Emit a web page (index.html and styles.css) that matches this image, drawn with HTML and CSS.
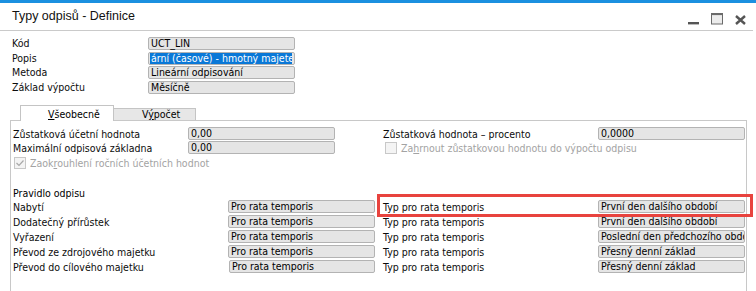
FILE: index.html
```html
<!DOCTYPE html>
<html lang="cs">
<head>
<meta charset="utf-8">
<title>Typy odpisů - Definice</title>
<link rel="stylesheet" href="styles.css">
</head>
<body>
<div class="window">
  <div class="topbar"></div>
  <div class="titlebar">
    <span class="title">Typy odpisů - Definice</span>
    <div class="winbtns">
      <svg class="btn-min" width="12" height="12" viewBox="0 0 12 12"><rect x="0" y="8" width="11" height="2.4" fill="#555"/></svg>
      <svg class="btn-max" width="13" height="12" viewBox="0 0 13 12"><rect x="0.5" y="0.5" width="11" height="10.5" fill="#ececec" stroke="#6a6a6a"/><rect x="0.5" y="0.5" width="11" height="1.6" fill="#6a6a6a"/></svg>
      <svg class="btn-close" width="11" height="10" viewBox="0 0 11 10"><path d="M1 1 L10 9 M10 1 L1 9" stroke="#555" stroke-width="2.4"/></svg>
    </div>
  </div>

  <div class="header-form">
    <span class="lbl">Kód</span><div class="field">UCT_LIN</div>
    <span class="lbl">Popis</span><div class="field sel"><span class="selected">ární (časové) - hmotný majetek</span></div>
    <span class="lbl">Metoda</span><div class="field">Lineární odpisování</div>
    <span class="lbl">Základ výpočtu</span><div class="field">Měsíčně</div>
  </div>

  <div class="content">
    <div class="tabs">
      <div class="tab active"><u>V</u>šeobecně</div>
      <div class="tab">V<u>ý</u>počet</div>
    </div>
    <div class="panel">
      <div class="grid-top">
        <span class="lbl">Zůstatková účetní hodnota</span>
        <div class="field">0,00</div>
        <span class="spacer"></span>
        <span class="lbl">Zůstatková hodnota – procento</span>
        <div class="field">0,0000</div>

        <span class="lbl">Maximální odpisová základna</span>
        <div class="field">0,00</div>
        <span class="spacer"></span>
        <div class="check check-right"><span class="box"></span><span class="ctext">Za<u>h</u>rnout zůstatkovou hodnotu do výpočtu odpisu</span></div>

        <div class="check check-left"><span class="box checked"><svg width="10" height="10" viewBox="0 0 10 10"><path d="M1.5 5 L4 7.5 L8.5 2.5" fill="none" stroke="#a8a8a8" stroke-width="1.2"/></svg></span><span class="ctext">Zaok<u>r</u>ouhlení ročních účetních hodnot</span></div>
      </div>

      <div class="rule-title">Pravidlo odpisu</div>

      <div class="grid-rules">
        <span class="lbl">Nabytí</span><div class="field">Pro rata temporis</div><span class="spacer"></span>
        <span class="lbl">Typ pro rata temporis</span><div class="field">První den dalšího období</div>

        <span class="lbl">Dodatečný přírůstek</span><div class="field">Pro rata temporis</div><span class="spacer"></span>
        <span class="lbl">Typ pro rata temporis</span><div class="field">První den dalšího období</div>

        <span class="lbl">Vyřazení</span><div class="field">Pro rata temporis</div><span class="spacer"></span>
        <span class="lbl">Typ pro rata temporis</span><div class="field">Poslední den předchozího období</div>

        <span class="lbl">Převod ze zdrojového majetku</span><div class="field">Pro rata temporis</div><span class="spacer"></span>
        <span class="lbl">Typ pro rata temporis</span><div class="field">Přesný denní základ</div>

        <span class="lbl">Převod do cílového majetku</span><div class="field shift">Pro rata temporis</div><span class="spacer"></span>
        <span class="lbl">Typ pro rata temporis</span><div class="field">Přesný denní základ</div>
      </div>

      <div class="highlight"></div>
    </div>
  </div>
</div>
</body>
</html>
```

FILE: styles.css
```css
* { box-sizing: border-box; }
html, body {
  margin: 0;
  padding: 0;
  background: #ffffff;
}
body {
  width: 756px;
  height: 291px;
  overflow: hidden;
  font-family: "DejaVu Sans Condensed", "DejaVu Sans", "Liberation Sans", sans-serif;
  font-size: 10.5px;
  color: #000;
}
.window {
  width: 756px;
  height: 291px;
  overflow: hidden;
  background: #fff;
}
.topbar {
  height: 3px;
  background: #1b90e0;
}
.titlebar {
  height: 28px;
  margin-right: 3px;
  border-bottom: 1px solid #cacaca;
  display: flex;
  align-items: center;
  justify-content: space-between;
  padding-left: 12px;
}
.title {
  font-family: "Liberation Sans", Arial, sans-serif;
  font-size: 12.5px;
  color: #111;
  margin-top: -1px;
}
.winbtns {
  display: flex;
  align-items: flex-start;
  height: 27px;
  padding-top: 9px;
}
.btn-min { margin-top: 2px; margin-right: 11px; }
.btn-max { margin-top: 1px; margin-right: 11px; }
.btn-close { margin-top: 3px; margin-right: 7px; }

.header-form {
  display: grid;
  grid-template-columns: 136px 147px;
  grid-auto-rows: 13px;
  row-gap: 1.67px;
  padding: 6px 0 0 12px;
}
.lbl {
  line-height: 14px;
  white-space: nowrap;
  color: #0c0c0c;
}
.header-form .lbl { line-height: 13px; }
.field {
  height: 13px;
  border: 1px solid #b3b3b3;
  border-radius: 2px;
  background: #e5e5e5;
  line-height: 11px;
  padding-left: 2px;
  white-space: nowrap;
  overflow-x: clip;
  overflow-y: visible;
  color: #000;
}
.field.sel { padding-left: 1px; }
.selected {
  background: #0a78d7;
  color: #fff;
  display: inline-block;
  width: 142px;
  overflow: hidden;
  padding-left: 1px;
}

.content {
  margin: 11px 0 0 10px;
  width: 737px;
}
.tabs {
  display: flex;
  align-items: flex-end;
  height: 15px;
  padding-left: 10px;
}
.tab {
  border: 1px solid #c4c4c4;
  border-bottom: none;
  padding-left: 27px;
  line-height: 11px;
  white-space: nowrap;
}
.tab.active {
  width: 94px;
  height: 16px;
  margin-bottom: -1px;
  background: #fff;
  position: relative;
  z-index: 1;
  padding-top: 3px;
}
.tab:not(.active) {
  width: 83px;
  height: 12px;
  margin-left: -1px;
  background: #e7e7e7;
  padding-top: 0px;
  padding-left: 28px;
}
.panel {
  position: relative;
  border: 1px solid #c8c8c8;
  height: 200px;
  padding: 6px 0 0 2px;
}
.grid-top {
  display: grid;
  grid-template-columns: 175px 147px 48px 215px 147px;
  grid-template-rows: 14px 14px 15px;
}
.check {
  display: flex;
  align-items: center;
  color: #a3a3a3;
  white-space: nowrap;
}
.check-right {
  grid-column: 4 / 6;
  padding-left: 2px;
}
.check-left {
  grid-column: 1 / 4;
  padding-left: 1px;
  padding-top: 1px;
}
.box {
  width: 12px;
  height: 12px;
  border: 1px solid #c8c8c8;
  background: #f4f4f4;
  display: flex;
  align-items: center;
  justify-content: center;
  margin-right: 4px;
}
.rule-title {
  margin-top: 16px;
  height: 14px;
  line-height: 14px;
}
.grid-rules {
  display: grid;
  grid-template-columns: 215px 147px 8px 215px 147px;
  grid-auto-rows: 15px;
}
.grid-rules .lbl { line-height: 15px; }
.field.shift { margin-left: 1px; }
.highlight {
  position: absolute;
  left: 366px;
  top: 73px;
  width: 376px;
  height: 23px;
  border: 3px solid #e8433e;
  pointer-events: none;
}
```
